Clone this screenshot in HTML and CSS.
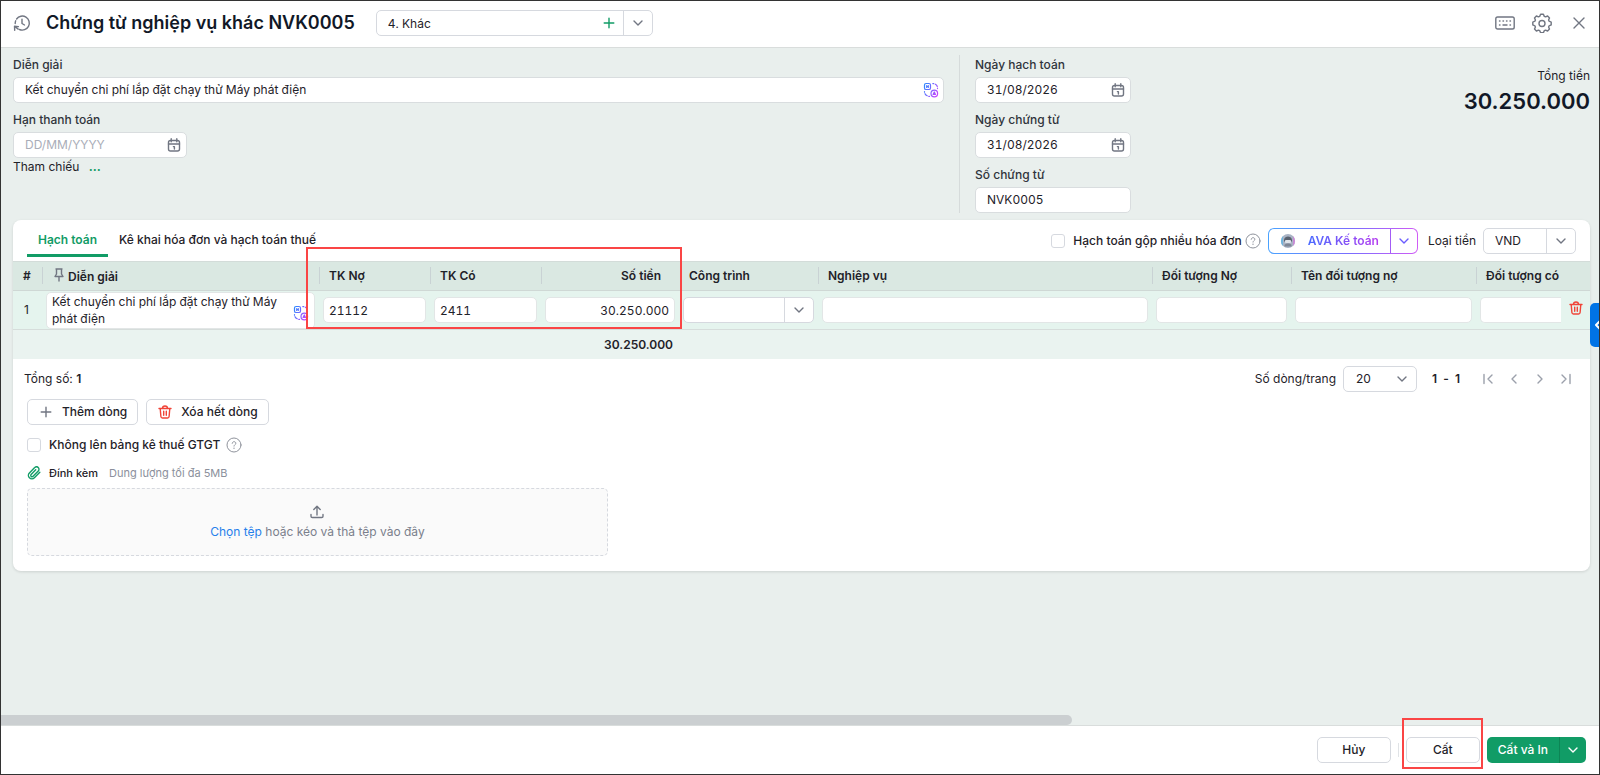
FILE: index.html
```html
<!DOCTYPE html>
<html lang="vi">
<head>
    <meta charset="UTF-8">
    <meta name="viewport" content="width=device-width, initial-scale=1.0">
    <title>Chứng từ nghiệp vụ khác NVK0005</title>
    <link rel="stylesheet" href="styles.css">
</head>
<body>
    <!-- shared icons -->
    <svg class="sprite" aria-hidden="true">
        <defs>
            <linearGradient id="ava" gradientUnits="userSpaceOnUse" x1="1" y1="4" x2="15" y2="12">
                <stop offset="0" stop-color="#2f86ff"/>
                <stop offset="1" stop-color="#c944ff"/>
            </linearGradient>
        </defs>
        <symbol id="i-down" viewBox="0 0 16 16"><path d="M4 6l4 4 4-4"/></symbol>
        <symbol id="i-plus" viewBox="0 0 16 16"><path d="M8 3.2v9.6M3.2 8h9.6"/></symbol>
        <symbol id="i-calendar" viewBox="0 0 16 16">
            <rect x="2.5" y="3.5" width="11" height="10.5" rx="2"/>
            <path d="M2.5 7h11M5.2 1.8v3M10.8 1.8v3M7.4 9.6h1v2.4"/>
        </symbol>
        <symbol id="i-trash" viewBox="0 0 16 16">
            <path d="M2 4.5h12M5.5 4.3c0-3 5-3 5 0M3.2 4.5l.7 8c.1 1 .6 1.5 1.5 1.5h5.2c.9 0 1.4-.5 1.5-1.5l.7-8M6.7 7.2v4M9.3 7.2v4"/>
        </symbol>
        <symbol id="i-translate" viewBox="0 0 16 16">
            <rect x="1.5" y="1.5" width="6" height="6" rx="1.6"/>
            <path d="M3.7 3.5v2M5.3 3.5v2M3.7 4.5h1.6"/>
            <circle cx="11.3" cy="11.5" r="3.3"/>
            <path d="M10.1 12.5l1.2-2.5 1.2 2.5z"/>
            <path d="M9.8 1.6h1M12.3 2.2c1 .5 1.7 1.3 2 2.3M14.5 6.2v.4M1.5 9.5v.7M2 11.7c.5 1 1.2 1.7 2.2 2.1M5.8 14.4h.7"/>
        </symbol>
        <symbol id="i-help" viewBox="0 0 16 16">
            <circle cx="8" cy="8" r="7"/>
            <path d="M6.2 6.3c.1-2.3 3.7-2.2 3.6.1 0 1.3-1.8 1.3-1.8 2.7M8 11v.6"/>
        </symbol>
    </svg>

    <div class="window">
        <header class="topbar">
            <button class="icon-btn" aria-label="Lịch sử">
                <svg class="icon icon-18" viewBox="0 0 18 18"><path d="M3.6 5A7 7 0 1 1 6.5 15.5M2.2 9.5c0-1 .1-1.8.5-2.7M1.5 12.2l.2 4M1.5 12.2l3.9.4M1.8 12.5l3.4 2.6M9 5.2v4.3l2.5 1.5"/></svg>
            </button>
            <h1>Chứng từ nghiệp vụ khác NVK0005</h1>
            <div class="combo combo-type">
                <input type="text" value="4. Khác" aria-label="Loại chứng từ">
                <button class="combo-add" aria-label="Thêm"><svg class="icon green"><use href="#i-plus"/></svg></button>
                <button class="combo-arrow" aria-label="Mở danh sách"><svg class="icon"><use href="#i-down"/></svg></button>
            </div>
            <div class="topbar-tools">
                <button class="icon-btn" aria-label="Phím tắt">
                    <svg class="icon icon-20" viewBox="0 0 20 20"><rect x=".8" y="4" width="18.4" height="12" rx="1.8"/><path d="M4.5 8h.5M8 8h.5M11.5 8h.5M15 8h.5M4.5 12h.5M8 12h4M15 12h.5"/></svg>
                </button>
                <button class="icon-btn" aria-label="Thiết lập">
                    <svg class="icon icon-20" viewBox="0 0 20 20"><path d="M8.6 1.3h2.8l.9 2.1 1.2.5 2.1-.9 1.9 1.9-.9 2.1.5 1.2 2.1.9v2.8l-2.1.9-.5 1.2.9 2.1-1.9 1.9-2.1-.9-1.2.5-.9 2.1H8.6l-.9-2.1-1.2-.5-2.1.9-1.9-1.9.9-2.1-.5-1.2-2.1-.9V9.1l2.1-.9.5-1.2-.9-2.1L4.4 3l2.1.9 1.2-.5z"/><circle cx="10" cy="10.500" r="3"/></svg>
                </button>
                <button class="icon-btn" aria-label="Đóng">
                    <svg class="icon icon-20" viewBox="0 0 20 20"><path d="M5 5l10 10M15 5L5 15"/></svg>
                </button>
            </div>
        </header>

        <main class="content">
            <section class="voucher">
                <div class="voucher-left">
                    <div class="field">
                        <label for="description">Diễn giải</label>
                        <div class="input-box">
                            <input type="text" id="description" value="Kết chuyển chi phí lắp đặt chạy thử Máy phát điện">
                            <svg class="icon gradient"><use href="#i-translate"/></svg>
                        </div>
                    </div>
                    <div class="field field-due">
                        <label for="due">Hạn thanh toán</label>
                        <div class="input-box">
                            <input type="text" id="due" placeholder="DD/MM/YYYY">
                            <svg class="icon"><use href="#i-calendar"/></svg>
                        </div>
                    </div>
                    <div class="reference">Tham chiếu <a href="#" aria-label="Chọn tham chiếu">...</a></div>
                </div>
                <div class="voucher-right">
                    <div class="field">
                        <label for="posted">Ngày hạch toán</label>
                        <div class="input-box">
                            <input type="text" id="posted" value="31/08/2026">
                            <svg class="icon"><use href="#i-calendar"/></svg>
                        </div>
                    </div>
                    <div class="field">
                        <label for="issued">Ngày chứng từ</label>
                        <div class="input-box">
                            <input type="text" id="issued" value="31/08/2026">
                            <svg class="icon"><use href="#i-calendar"/></svg>
                        </div>
                    </div>
                    <div class="field">
                        <label for="number">Số chứng từ</label>
                        <div class="input-box">
                            <input type="text" id="number" value="NVK0005">
                        </div>
                    </div>
                </div>
                <div class="total">
                    <div>Tổng tiền</div>
                    <strong>30.250.000</strong>
                </div>
            </section>

            <section class="card">
                <div class="card-head">
                    <nav class="tabs">
                        <a href="#" class="tab active">Hạch toán</a>
                        <a href="#" class="tab">Kê khai hóa đơn và hạch toán thuế</a>
                    </nav>
                    <div class="card-tools">
                        <label class="check"><input type="checkbox"> Hạch toán gộp nhiều hóa đơn</label>
                        <svg class="icon help"><use href="#i-help"/></svg>
                        <div class="ava">
                            <button class="ava-main">
                                <svg class="ava-logo" viewBox="0 0 16 16"><circle cx="8" cy="8" r="7" fill="#a9b3c4"/><path d="M3 3a7 7 0 0 0 0 10z" fill="#6fb4dc"/><path d="M13 3a7 7 0 0 1 0 10z" fill="#c98ad6"/><path d="M4 6.5c1-4 7-4 8 0v2H4z" fill="#59616f"/><rect x="5" y="7" width="6" height="3" rx="1" fill="#dfe4ea"/><path d="M4.5 12c1-2 6-2 7 0v1.5h-7z" fill="#7d8695"/></svg>
                                <span>AVA Kế toán</span>
                            </button>
                            <button class="ava-arrow" aria-label="Tùy chọn AVA"><svg class="icon"><use href="#i-down"/></svg></button>
                        </div>
                        <label for="currency" class="currency-label">Loại tiền</label>
                        <div class="combo combo-currency">
                            <input type="text" id="currency" value="VND">
                            <button class="combo-arrow" aria-label="Mở danh sách"><svg class="icon"><use href="#i-down"/></svg></button>
                        </div>
                    </div>
                </div>

                <div class="grid-wrap">
                    <table class="grid">
                        <colgroup>
                            <col class="c-no"><col class="c-desc"><col class="c-acc"><col class="c-acc"><col class="c-amount">
                            <col class="c-work"><col><col class="c-work"><col class="c-name"><col class="c-credit"><col class="c-del">
                        </colgroup>
                        <thead>
                            <tr>
                                <th>#</th>
                                <th class="pinned"><svg class="icon icon-14" viewBox="0 0 14 14"><path d="M4 1h6M4.5 1v5L3 8.5h8L9.500 6V1M7 8.5V13"/></svg>Diễn giải</th>
                                <th>TK Nợ</th>
                                <th>TK Có</th>
                                <th class="num">Số tiền</th>
                                <th>Công trình</th>
                                <th>Nghiệp vụ</th>
                                <th>Đối tượng Nợ</th>
                                <th>Tên đối tượng nợ</th>
                                <th colspan="2">Đối tượng có</th>
                            </tr>
                        </thead>
                        <tbody>
                            <tr>
                                <td class="row-no">1</td>
                                <td>
                                    <div class="desc-cell">
                                        <textarea rows="2" aria-label="Diễn giải">Kết chuyển chi phí lắp đặt chạy thử Máy phát điện</textarea>
                                        <svg class="icon gradient"><use href="#i-translate"/></svg>
                                    </div>
                                </td>
                                <td><input type="text" value="21112" aria-label="TK Nợ"></td>
                                <td><input type="text" value="2411" aria-label="TK Có"></td>
                                <td><input type="text" class="num" value="30.250.000" aria-label="Số tiền"></td>
                                <td>
                                    <div class="combo">
                                        <input type="text" aria-label="Công trình">
                                        <button class="combo-arrow" aria-label="Mở danh sách"><svg class="icon"><use href="#i-down"/></svg></button>
                                    </div>
                                </td>
                                <td><input type="text" aria-label="Nghiệp vụ"></td>
                                <td><input type="text" aria-label="Đối tượng Nợ"></td>
                                <td><input type="text" aria-label="Tên đối tượng nợ"></td>
                                <td class="cut"><input type="text" aria-label="Đối tượng có"></td>
                                <td class="del"><button class="icon-btn" aria-label="Xóa dòng"><svg class="icon red"><use href="#i-trash"/></svg></button></td>
                            </tr>
                        </tbody>
                        <tfoot>
                            <tr>
                                <td colspan="4"></td>
                                <td class="num">30.250.000</td>
                                <td colspan="6"></td>
                            </tr>
                        </tfoot>
                    </table>
                    <div class="highlight highlight-grid"></div>
                </div>

                <div class="pager">
                    <div>Tổng số: <b>1</b></div>
                    <div class="pager-right">
                        <label for="pagesize">Số dòng/trang</label>
                        <div class="select-box">
                            <select id="pagesize">
                                <option>20</option>
                                <option>50</option>
                                <option>100</option>
                            </select>
                            <svg class="icon"><use href="#i-down"/></svg>
                        </div>
                        <div class="range"><b>1</b><b>-</b><b>1</b></div>
                        <div class="pager-nav">
                            <button class="icon-btn" aria-label="Trang đầu"><svg class="icon" viewBox="0 0 16 16"><path d="M4 3.5v9M12 4L8 8l4 4"/></svg></button>
                            <button class="icon-btn" aria-label="Trang trước"><svg class="icon" viewBox="0 0 16 16"><path d="M10 4L6 8l4 4"/></svg></button>
                            <button class="icon-btn" aria-label="Trang sau"><svg class="icon" viewBox="0 0 16 16"><path d="M6 4l4 4-4 4"/></svg></button>
                            <button class="icon-btn" aria-label="Trang cuối"><svg class="icon" viewBox="0 0 16 16"><path d="M12 3.5v9M4 4l4 4-4 4"/></svg></button>
                        </div>
                    </div>
                </div>

                <div class="card-body">
                    <div class="row-actions">
                        <button class="btn"><svg class="icon"><use href="#i-plus"/></svg>Thêm dòng</button>
                        <button class="btn"><svg class="icon red"><use href="#i-trash"/></svg>Xóa hết dòng</button>
                    </div>
                    <div class="tax-row">
                        <label class="check"><input type="checkbox"> Không lên bảng kê thuế GTGT</label>
                        <svg class="icon help"><use href="#i-help"/></svg>
                    </div>
                    <div class="attach">
                        <svg class="icon icon-14 green" viewBox="0 0 14 14"><path d="M12.8 6.3l-5.4 5.500a3.400 3.400 0 0 1-5-4.900L7.700 1.600a2.400 2.400 0 0 1 3.600 3.400l-5.200 5.300a1.300 1.300 0 0 1-2-1.800l4.600-4.700"/></svg>
                        <span class="attach-title">Đính kèm</span>
                        <span class="muted">Dung lượng tối đa 5MB</span>
                    </div>
                    <div class="dropzone">
                        <svg class="icon" viewBox="0 0 16 16"><path d="M8 11V2.500M4.800 5.500L8 2.300l3.200 3.200M2 10.500v1.700c0 .9.500 1.300 1.300 1.300h9.400c.8 0 1.300-.4 1.300-1.300v-1.700"/></svg>
                        <div><a href="#">Chọn tệp</a> hoặc kéo và thả tệp vào đây</div>
                    </div>
                </div>
            </section>
            <button class="side-toggle" aria-label="Mở thanh bên"><svg class="icon" viewBox="0 0 16 16"><path d="M10 4L6 8l4 4"/></svg></button>
        </main>

        <div class="scroll-track"><div class="scroll-thumb"></div></div>

        <footer class="bottombar">
            <button class="btn btn-wide">Hủy</button>
            <span class="divider"></span>
            <div class="save">
                <button class="btn btn-wide">Cất</button>
                <div class="highlight highlight-save"></div>
            </div>
            <div class="btn-split">
                <button>Cất và In</button>
                <button class="split-arrow" aria-label="Tùy chọn in"><svg class="icon"><use href="#i-down"/></svg></button>
            </div>
        </footer>
    </div>
</body>
</html>
```
FILE: styles.css
```css
* {
    box-sizing: border-box;
}

body {
    margin: 0;
    font-family: Inter, "Liberation Sans", sans-serif;
    font-size: 12px;
    line-height: 16px;
    color: #1f2229;
}

input, textarea, select, button {
    font: inherit;
    color: inherit;
    margin: 0;
}

input, textarea {
    font-feature-settings: "tnum";
}

button {
    background: none;
    border: none;
    padding: 0;
    cursor: pointer;
}

a {
    text-decoration: none;
}

.sprite {
    position: absolute;
    width: 0;
    height: 0;
}

.icon {
    width: 16px;
    height: 16px;
    flex: none;
    display: block;
    fill: none;
    stroke: #717682;
    stroke-width: 1.4;
    stroke-linecap: round;
    stroke-linejoin: round;
}

.icon-14 { width: 14px; height: 14px; }
.icon-18 { width: 18px; height: 18px; }
.icon-20 { width: 20px; height: 20px; }
.green { stroke: #119c66; }
.red { stroke: #f04438; }
.gradient { stroke: url(#ava); stroke-width: 1.2; }
.help { stroke: #8f939c; stroke-width: 1; }

.icon-btn {
    display: flex;
}

.window {
    min-height: 100vh;
    display: flex;
    flex-direction: column;
    border: 1px solid #333;
    background: #e9efed;
}

/* top bar */
.topbar {
    height: 47px;
    display: flex;
    align-items: center;
    padding: 0 10px 2px 12px;
    background: #fff;
    border-bottom: 1px solid #d9dddc;
}

h1 {
    margin: 0 21px 0 15px;
    font-size: 18px;
    line-height: 24px;
    font-weight: 600;
    color: #111827;
}

.topbar-tools {
    display: flex;
    gap: 17px;
    margin-left: auto;
}

.combo {
    display: flex;
    align-items: center;
    height: 26px;
    background: #fff;
    border: 1px solid #d6d9df;
    border-radius: 5px;
}

.combo input {
    flex: 1;
    min-width: 0;
    height: 24px;
    border: none;
    border-radius: 5px;
    padding: 0 11px;
    background: none;
}

.combo-add {
    margin-right: 6px;
}

.combo-arrow {
    width: 29px;
    height: 24px;
    display: flex;
    align-items: center;
    justify-content: center;
    border-left: 1px solid #d6d9df;
}

.combo-type {
    width: 277px;
}

.combo-currency {
    width: 93px;
}

/* voucher form */
.content {
    flex: 1;
    position: relative;
    padding: 7px 9px 0 12px;
}

.voucher {
    display: flex;
}

.voucher-left {
    flex: 1;
    padding-right: 15px;
    border-right: 1px solid #d6dbdb;
}

.voucher-right {
    width: 171px;
    padding-left: 15px;
}

.field {
    margin-bottom: 7px;
}

.field label {
    display: block;
    height: 22px;
    padding-top: 2px;
    font-weight: 500;
    color: #30343c;
}

.voucher-right .field:last-child {
    margin-bottom: 0;
}

.field-due {
    width: 174px;
    margin-bottom: 1px;
}

.input-box {
    display: flex;
    align-items: center;
    height: 26px;
    padding: 0 4px 0 11px;
    background: #fff;
    border: 1px solid #d9dddf;
    border-radius: 5px;
}

.input-box input {
    flex: 1;
    min-width: 0;
    border: none;
    padding: 0;
    background: none;
    outline: none;
}

.input-box input::placeholder {
    color: #a9adb8;
}

.reference a {
    margin-left: 6px;
    color: #119c66;
    font-weight: 700;
}

.total {
    width: 459px;
    padding-top: 13px;
    text-align: right;
}

.total strong {
    display: block;
    margin-top: 2px;
    font-size: 22px;
    line-height: 30px;
    font-weight: 600;
    color: #111827;
}

/* card */
.card {
    margin-top: 7px;
    background: #fff;
    border-radius: 8px;
    box-shadow: 0 1px 3px rgba(0, 0, 0, 0.12);
}

.card-head {
    display: flex;
    justify-content: space-between;
    height: 41px;
    padding: 0 14px;
}

.tabs {
    display: flex;
}

.tab {
    height: 37px;
    padding: 12px 11px 0;
    font-weight: 500;
    color: #1f2229;
}

.tab.active {
    border-bottom: 3px solid #119c66;
    color: #119c66;
    font-weight: 600;
}

.card-tools {
    display: flex;
    align-items: center;
}

.check {
    display: flex;
    align-items: center;
    gap: 8px;
    font-weight: 500;
}

.check input {
    appearance: none;
    width: 14px;
    height: 14px;
    border: 1px solid #d6d9df;
    border-radius: 3px;
    background: #fff;
}

.card-tools .help {
    margin: 0 7px 0 3px;
}

.ava {
    display: flex;
    height: 26px;
    border: 1px solid transparent;
    border-radius: 6px;
    background: linear-gradient(#fff, #fff) padding-box, linear-gradient(90deg, #4aa3ff, #7a6cff 55%, #d05cf5) border-box;
}

.ava-main {
    display: flex;
    align-items: center;
    gap: 12px;
    padding: 0 11px;
}

.ava-main span {
    font-weight: 600;
    background: linear-gradient(90deg, #4b6bff, #b63df0);
    -webkit-background-clip: text;
    background-clip: text;
    color: transparent;
}

.ava-logo {
    width: 16px;
    height: 16px;
}

.ava-arrow {
    width: 27px;
    display: flex;
    align-items: center;
    justify-content: center;
    border-left: 1px solid #a35cf5;
}

.ava-arrow .icon {
    stroke: #6a5cff;
}

.currency-label {
    margin: 0 7px 0 10px;
}

/* accounting grid */
.grid-wrap {
    position: relative;
}

.grid {
    width: 100%;
    table-layout: fixed;
    border-collapse: separate;
    border-spacing: 0;
}

.c-no { width: 29px; }
.c-desc { width: 277px; }
.c-acc { width: 111px; }
.c-amount { width: 138px; }
.c-work { width: 139px; }
.c-name { width: 185px; }
.c-credit { width: 85px; }
.c-del { width: 29px; }

.grid th {
    position: relative;
    height: 30px;
    padding: 0 10px;
    background: #dae8e2;
    border-top: 1px solid #d3dcd9;
    border-bottom: 1px solid #cfd8d5;
    text-align: left;
    font-weight: 600;
    white-space: nowrap;
}

.grid th + th::before {
    content: "";
    position: absolute;
    left: 0;
    top: 5px;
    width: 1px;
    height: 17px;
    background: #c9d2d4;
}

.grid th:nth-child(6)::before {
    display: none;
}

.grid th.num {
    padding-right: 18px;
}

.grid .num {
    text-align: right;
}

.pinned .icon {
    display: inline-block;
    margin-right: 2px;
    vertical-align: -1px;
}

.grid tbody td {
    height: 39px;
    padding: 0 4px;
    background: #e5f4ee;
    border-bottom: 1px solid #d6dddb;
}

.grid tbody .row-no {
    padding: 0 11px;
}

.grid td > input {
    display: block;
    width: 100%;
    height: 26px;
    padding: 0 5px;
    border: 1px solid #e2e6e6;
    border-radius: 5px;
    background: #fff;
}

.desc-cell {
    display: flex;
    align-items: center;
    height: 37px;
    background: #fff;
    border: 1px solid #e2e6e6;
    border-radius: 5px;
}

.desc-cell textarea {
    flex: 1;
    min-width: 0;
    height: 35px;
    padding: 0 5px;
    line-height: 17px;
    border: none;
    resize: none;
    overflow: hidden;
    background: none;
}

.desc-cell .icon {
    margin: 6px 5px 0 0;
}

.grid tbody .cut {
    padding-right: 0;
}

.grid .cut input {
    border-right: none;
    border-radius: 5px 0 0 5px;
}

.grid tbody .del {
    padding: 0 0 4px 7px;
}

.grid tfoot td {
    height: 29px;
    padding: 0 6px 0 0;
    background: #eaf3f0;
    font-weight: 600;
}

/* red frames that mark the fields to check */
.highlight {
    position: absolute;
    border: 2px solid #fa4545;
    pointer-events: none;
}

.highlight-grid {
    left: 293px;
    top: -14px;
    width: 376px;
    height: 82px;
}

.pager {
    display: flex;
    align-items: center;
    justify-content: space-between;
    height: 40px;
    padding: 0 16px 0 11px;
}

.pager-right {
    display: flex;
    align-items: center;
}

.select-box {
    position: relative;
    width: 74px;
    margin: 0 15px 0 7px;
}

.select-box select {
    appearance: none;
    display: block;
    width: 100%;
    height: 26px;
    padding: 0 12px;
    border: 1px solid #d6d9df;
    border-radius: 5px;
    background: #fff;
}

.select-box .icon {
    position: absolute;
    right: 7px;
    top: 5px;
}

.pager b {
    font-weight: 600;
}

.range {
    display: flex;
    justify-content: space-between;
    width: 28px;
}

.pager-nav {
    display: flex;
    gap: 10px;
    margin-left: 20px;
}

.pager-nav .icon {
    stroke: #9ba0ab;
}

.card-body {
    padding: 0 14px 15px;
}

.row-actions {
    display: flex;
    gap: 8px;
}

.btn {
    display: flex;
    align-items: center;
    justify-content: center;
    gap: 8px;
    height: 26px;
    padding: 0 10px;
    background: #fff;
    border: 1px solid #d6d9df;
    border-radius: 5px;
    font-weight: 500;
}

.tax-row {
    display: flex;
    align-items: center;
    gap: 6px;
    margin-top: 12px;
}

.attach {
    display: flex;
    align-items: center;
    gap: 8px;
    margin-top: 12px;
    font-size: 11px;
}

.attach-title {
    margin-right: 3px;
    font-weight: 500;
}

.muted {
    color: #8b909c;
}

.dropzone {
    display: flex;
    flex-direction: column;
    align-items: center;
    justify-content: center;
    gap: 4px;
    width: 37.5%;
    min-width: 320px;
    height: 68px;
    margin-top: 7px;
    background: #fafafa;
    border: 1px dashed #d6d9df;
    border-radius: 5px;
    color: #7a7f8c;
}

.dropzone a {
    color: #2680eb;
}

.side-toggle {
    position: absolute;
    right: 0;
    top: 255px;
    width: 9px;
    height: 44px;
    overflow: hidden;
    background: #0073e6;
    border-radius: 5px 0 0 5px;
}

.side-toggle .icon {
    stroke: #fff;
    stroke-width: 2;
}

.scroll-track {
    height: 10px;
}

.scroll-thumb {
    width: 67%;
    height: 10px;
    background: #cbcfd1;
    border-radius: 0 5px 5px 0;
}

/* bottom bar */
.bottombar {
    display: flex;
    align-items: center;
    justify-content: flex-end;
    gap: 7px;
    height: 49px;
    padding: 0 13px 0 0;
    background: #fff;
    border-top: 1px solid #d9dddc;
}

.btn-wide {
    width: 74px;
}

.divider {
    width: 1px;
    height: 14px;
    background: #e0e3e6;
}

.save {
    position: relative;
}

.highlight-save {
    inset: -19px -3px -6px -4px;
}

.btn-split {
    display: flex;
    height: 26px;
    background: #119c66;
    border-radius: 5px;
    color: #fff;
    font-weight: 500;
}

.btn-split button {
    padding: 0 11px;
}

.btn-split .split-arrow {
    width: 27px;
    padding: 0 5px;
    border-left: 1px solid #0d8555;
}

.btn-split .icon {
    stroke: #fff;
}
```
